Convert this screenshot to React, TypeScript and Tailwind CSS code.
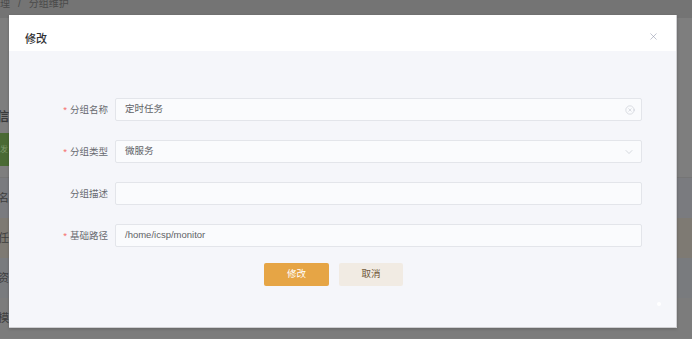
import React from 'react';
import { X, ChevronDown, CircleX } from 'lucide-react';

const font = { fontFamily: '"Liberation Sans", "Noto Sans CJK SC", sans-serif' };

interface FieldProps {
  label: string;
  required?: boolean;
  children: React.ReactNode;
}

const Field: React.FC<FieldProps> = ({ label, required, children }) => (
  <div className="flex items-center h-[23px]">
    <div className="w-[106px] pr-[7px] text-right text-[9.5px] text-[#686a70] leading-none">
      {required && <span className="text-[#f56c6c] mr-[3px]">*</span>}
      {label}
    </div>
    <div className="w-[527px] h-full">{children}</div>
  </div>
);

const Input: React.FC<{ value?: string; right?: React.ReactNode }> = ({ value, right }) => (
  <div className="h-full flex items-center justify-between bg-[#fafbfd] border border-[#e3e5ea] rounded-[2px] pl-[9px] pr-[6px]">
    <span className="text-[9.5px] text-[#606266]">{value}</span>
    {right}
  </div>
);

export default function App() {
  return <div className="relative w-[692px] h-[339px] overflow-hidden bg-[#7e7e7e]" style={font}>
      {/* page behind the mask */}
      <div className="h-[18px] bg-[#747474] flex items-end pb-[7px]">
        <span className="text-[10px] text-[#4a4a4a] -ml-[10px] flex">
          管理<span className="mx-[8px]">/</span>分组维护
        </span>
      </div>
      <div className="h-[82px]" />
      <div className="h-[33px] flex items-center text-[12px] font-bold text-[#3a3a3a] -ml-[3px]">信</div>
      <div className="h-[33px] flex">
        <div className="w-[12px] bg-[#4a6a34] text-[8px] text-[#7f9a6c] flex items-center">发</div>
      </div>
      <div className="h-[12px] border-b border-[#757575]" />
      <div className="h-[40px] flex items-center text-[11px] text-[#3e3e3e] bg-[#7a7b7f] -ml-[2px]">名</div>
      <div className="h-[40px] flex items-center text-[11px] text-[#3e3e3e] bg-[#7e7a73] -ml-[2px]">任</div>
      <div className="h-[40px] flex items-center text-[11px] text-[#3e3e3e] bg-[#797b7e] -ml-[2px]">资</div>
      <div className="h-[40px] flex items-center text-[11px] text-[#3e3e3e] bg-[#7c7c7c] -ml-[2px]">模</div>

      {/* dialog */}
      <div className="absolute left-[9px] top-[15px] w-[668px] h-[313px] flex flex-col border-r border-b border-[#cfcfd2] shadow-[0_1px_3px_rgba(0,0,0,0.2)]">
        <div className="h-[36px] bg-white flex items-center justify-between pl-[16px] pr-[17px]">
          <span className="text-[11px] font-medium text-[#303133] pt-[12px]">修改</span>
          <X size={11} strokeWidth={1.2} className="text-[#8d93a8] mt-[6px]" />
        </div>
        <div className="relative flex-1 bg-[#f5f6fa] pt-[47px] flex flex-col gap-[19px]">
          <Field label="分组名称" required>
            <Input value="定时任务" right={<CircleX size={10} strokeWidth={1.3} className="text-[#c0c4cc]" />} />
          </Field>
          <Field label="分组类型" required>
            <Input value="微服务" right={<ChevronDown size={12} strokeWidth={1.3} className="text-[#c0c4cc]" />} />
          </Field>
          <Field label="分组描述">
            <Input />
          </Field>
          <Field label="基础路径" required>
            <Input value="/home/icsp/monitor" />
          </Field>
          <div className="flex gap-[10px] pl-[255px] -mt-[3px]">
            <button className="w-[65px] h-[23px] rounded-[2px] bg-[#e6a545] text-white text-[9.5px]">修改</button>
            <button className="w-[64px] h-[23px] rounded-[2px] bg-[#f1ebe3] text-[#6e5536] text-[9.5px]">取消</button>
          </div>
          <div className="absolute left-[648px] top-[251px] w-[4px] h-[4px] rounded-full bg-white" />
        </div>
      </div>
    </div>;
}
